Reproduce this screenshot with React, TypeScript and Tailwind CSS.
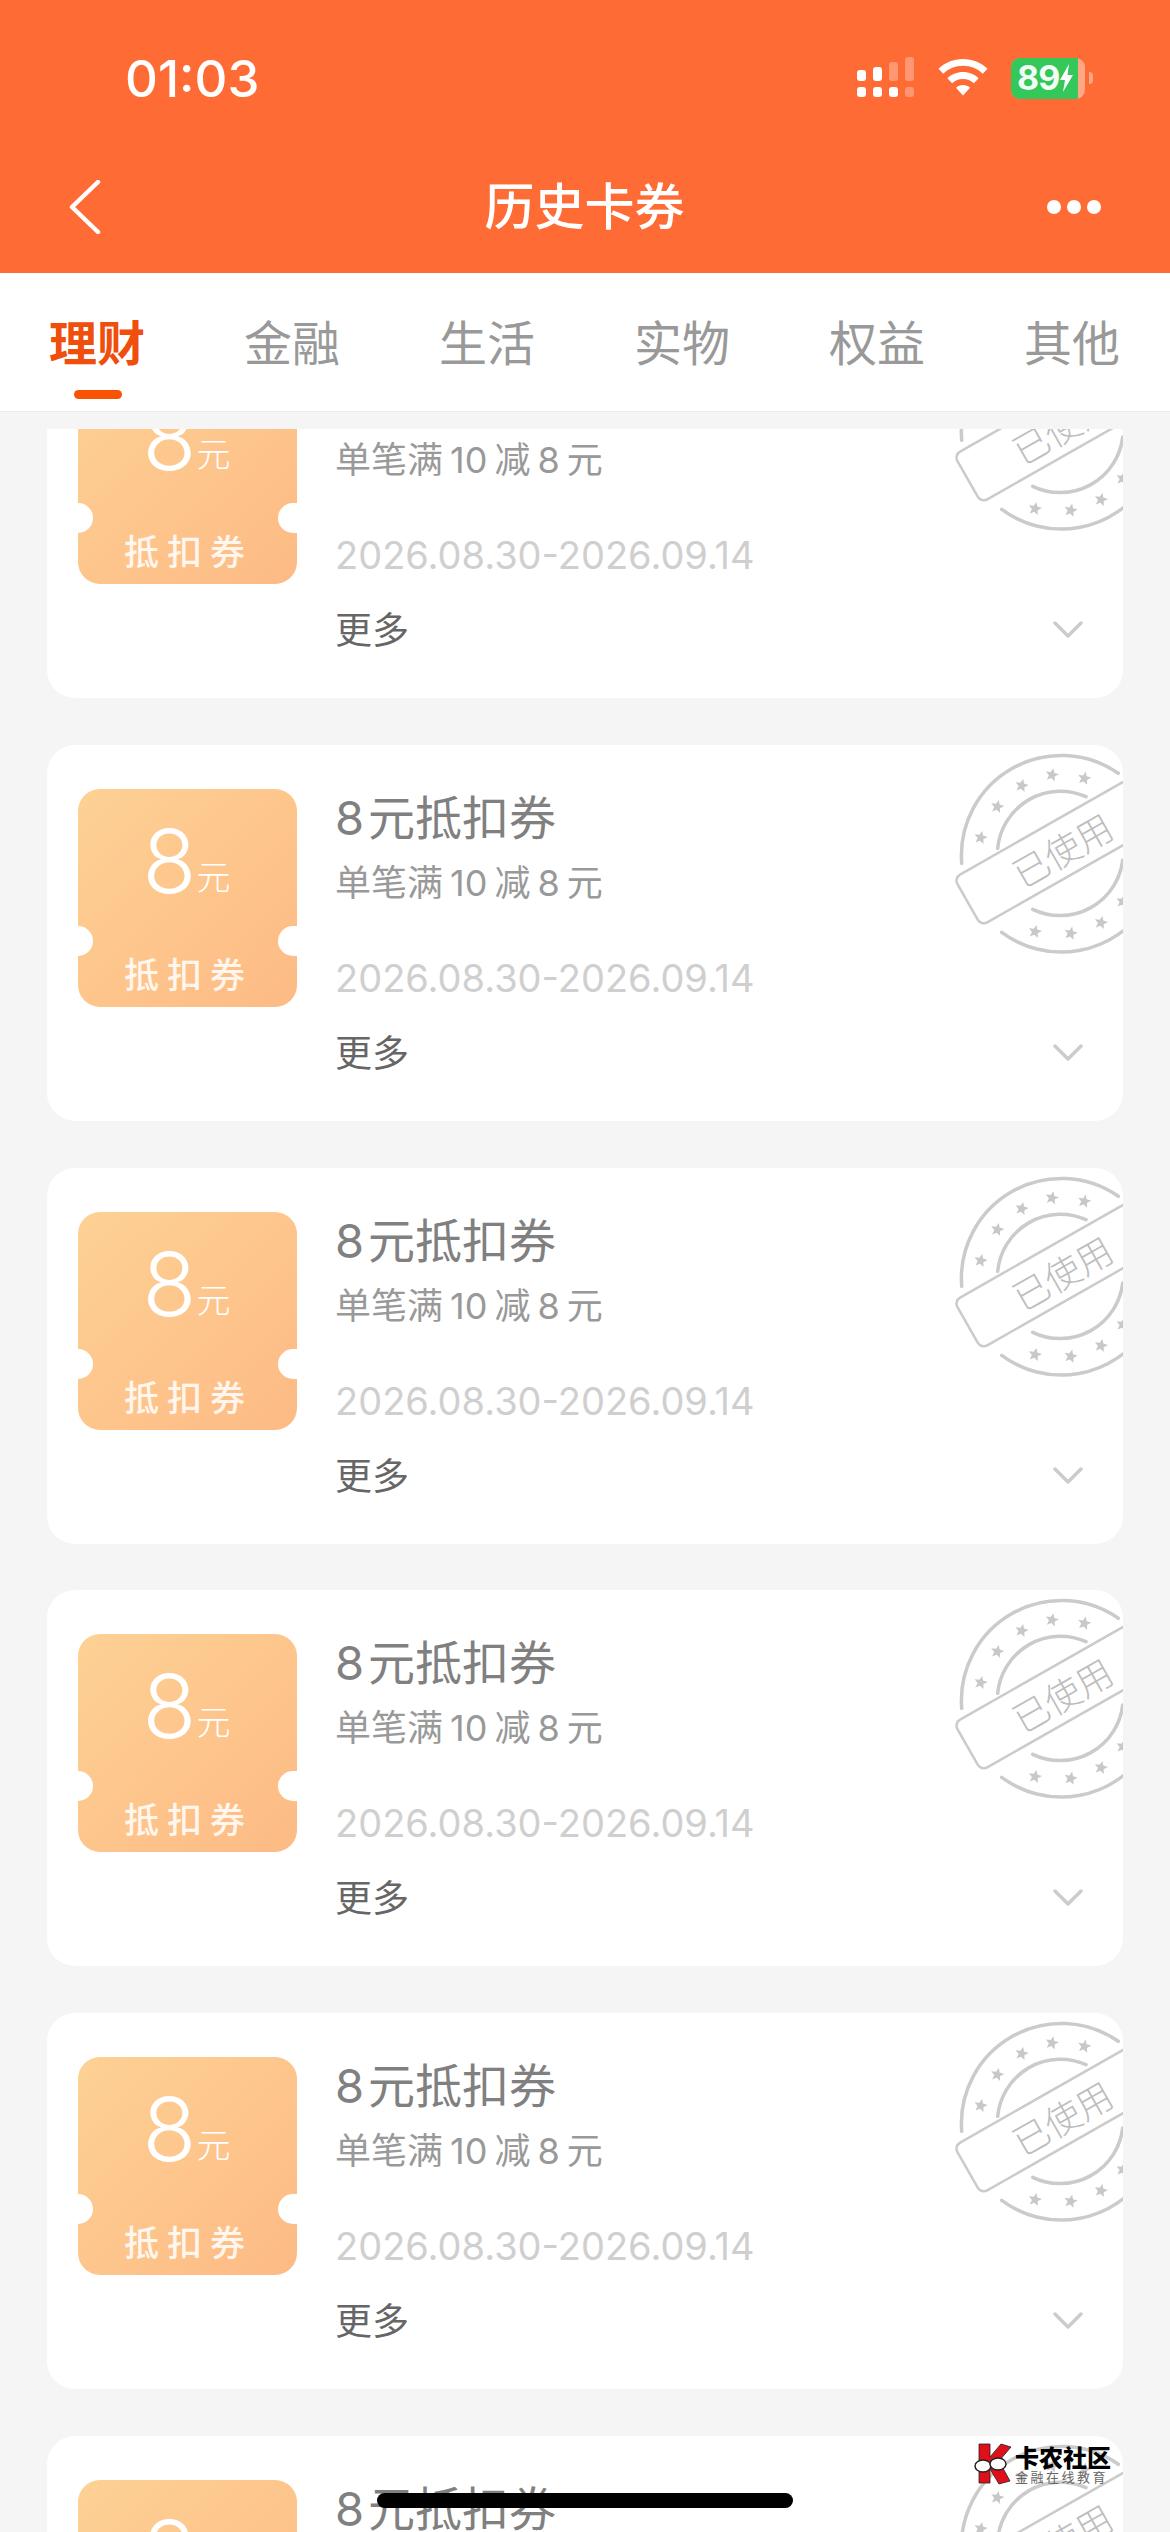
import React from 'react';

const cjk = '[font-family:Inter,"Noto_Sans_CJK_SC",sans-serif]';

const starSpots = [
  [80.7, 107.7], [97.3, 76.7], [121.7, 55.7], [152, 45], [184.3, 48.3],
  [135, 201.7], [170.7, 203.3], [201, 192.7], [222.7, 171.7],
];

function starPoints(cx: number, cy: number, r: number) {
  const pts: string[] = [];
  for (let i = 0; i < 10; i++) {
    const rad = i % 2 === 0 ? r : r * 0.45;
    const a = (-90 + i * 36 + 12) * (Math.PI / 180);
    pts.push(`${(cx + rad * Math.cos(a)).toFixed(1)},${(cy + rad * Math.sin(a)).toFixed(1)}`);
  }
  return pts.join(' ');
}

const Stamp = () => (
  <svg className="absolute left-[853px] top-[-15px]" width="270" height="240" viewBox="0 0 270 240" fill="none">
    <g stroke="#cbcbcb" strokeWidth="3.5" strokeLinecap="round">
      <path d="M61.7 133.3A100 100 0 0 1 218.3 43.3" />
      <path d="M101.7 202.3A100 100 0 0 0 245 177" />
      <path d="M97.7 118.3A63 63 0 0 1 186 66.7" />
      <path d="M132.7 179.3A63 63 0 0 0 222.7 130" />
    </g>
    {starSpots.map(([x, y]) => (
      <polygon key={`${x}-${y}`} points={starPoints(x, y, 7)} fill="#c8c8c8" />
    ))}
    <rect x="54" y="148" width="225" height="55" rx="7" fill="#fff" stroke="#cbcbcb" strokeWidth="2.5" transform="rotate(-29.6 54 148)" />
    <text
      x="163"
      y="134"
      textAnchor="middle"
      fontSize="36"
      fill="#bdbdbd"
      fontFamily='"Noto Sans CJK SC", sans-serif'
      fontWeight="300"
      transform="rotate(-29.6 163 121)"
    >
      已使用
    </text>
  </svg>
);

const Ticket = () => (
  <div className="relative h-[218px] w-[219px] shrink-0 overflow-hidden rounded-[22px] bg-gradient-to-br from-[#fdd195] to-[#fdba84] text-white">
    <div className="absolute left-[-15px] top-[137px] h-[30px] w-[30px] rounded-full bg-white" />
    <div className="absolute right-[-19px] top-[137px] h-[30px] w-[38px] rounded-full bg-white" />
    <div className="flex h-[132px] items-end justify-center pb-[10px] pr-[2px]">
      <span className="text-[88px] font-light leading-[100px]">8</span>
      <span className="mb-[13px] text-[34px] font-light leading-[40px]">元</span>
    </div>
    <div className="flex justify-center gap-[8px] pr-[6px] pt-[32px] text-[35px] font-medium leading-[44px] text-white/85">
      <span>抵</span>
      <span>扣</span>
      <span>券</span>
    </div>
  </div>
);

const Coupon = () => (
  <div className={`relative h-[376px] shrink-0 overflow-hidden rounded-[28px] bg-white ${cjk}`}>
    <div className="flex pl-[31px] pt-[44px]">
      <Ticket />
      <div className="ml-[38px] flex flex-col">
        <div className="mt-[1px] flex h-[56px] items-center gap-[4px] text-[47px] leading-[56px] text-[#808080]">
          <span>8</span>
          <span>元抵扣券</span>
        </div>
        <div className="mt-[13px] flex h-[48px] items-center gap-[7px] text-[36px] leading-[48px] text-[#999999]">
          <span>单笔满</span>
          <span>10</span>
          <span>减</span>
          <span>8</span>
          <span>元</span>
        </div>
        <div className="mt-[47px] h-[48px] text-[38px] leading-[48px] text-[#cfcfcf]">2026.08.30-2026.09.14</div>
        <div className="mt-[28px] h-[48px] text-[37px] leading-[48px] text-[#666666]">更多</div>
      </div>
    </div>
    <Stamp />
    <svg className="absolute left-[1006px] top-[298px]" width="30" height="20" viewBox="0 0 30 20" fill="none">
      <path d="M2 3l13 13L28 3" stroke="#cccccc" strokeWidth="3.5" strokeLinecap="round" strokeLinejoin="round" />
    </svg>
  </div>
);

const StatusIcons = () => (
  <div className="flex items-center">
    <svg width="58" height="42" viewBox="0 0 58 42" fill="#fff">
      <rect x="0" y="13" width="9" height="11" rx="3" />
      <rect x="16" y="10" width="9" height="14" rx="3" />
      <rect x="32" y="5" width="9" height="19" rx="3" opacity="0.3" />
      <rect x="48" y="0" width="9" height="24" rx="3" opacity="0.3" />
      <rect x="0" y="30" width="9" height="10" rx="3" />
      <rect x="16" y="30" width="9" height="10" rx="3" />
      <rect x="32" y="30" width="9" height="10" rx="3" />
      <rect x="48" y="30" width="9" height="10" rx="3" opacity="0.3" />
    </svg>
    <svg className="ml-[23px]" width="50" height="38" viewBox="0 0 50 38" fill="#fff">
      <path d="M25 0c9.500 0 18 3.600 24.500 9.700L44.800 14.700C39.600 9.800 32.700 6.800 25 6.800S10.400 9.800 5.200 14.700L.5 9.700C7 3.600 15.500 0 25 0z" />
      <path d="M25 13c6 0 11.500 2.300 15.600 6.200l-4.700 5C33 21.500 29.200 20 25 20s-8 1.500-10.900 4.200l-4.700-5C13.500 15.300 19 13 25 13z" />
      <path d="M25 26c2.700 0 5.100 1 7 2.700L25 36.500l-7-7.800c1.900-1.700 4.300-2.700 7-2.700z" />
    </svg>
    <div className="relative ml-[23px] h-[41px] w-[74px] overflow-hidden rounded-[9px] bg-white/40">
      <div className="flex h-full w-[67px] items-center bg-[#34c759] pl-[6px] text-[34px] font-bold leading-none text-white/95 [font-family:Inter,sans-serif]">
        <span className="tracking-[-1px]">89</span>
        <svg width="15" height="30" viewBox="0 0 15 30" fill="#fff" className="shrink-0">
          <path d="M10 1L1 17h5L4 29l10-17H8.500z" />
        </svg>
      </div>
    </div>
    <div className="ml-[4px] h-[12px] w-[4px] rounded-r-full bg-white/40" />
  </div>
);

const tabs = ['理财', '金融', '生活', '实物', '权益', '其他'];

const Tabs = () => (
  <div className="flex h-[139px] border-b border-[#ececec] bg-white pl-[49px] pt-[45px]">
    {tabs.map((t, i) => (
      <div key={t} className="flex w-[195px] shrink-0 flex-col">
        <span className={i === 0 ? 'text-[48px] font-bold leading-[52px] text-[#f04e0c]' : 'text-[48px] leading-[52px] text-[#999999]'}>
          {t}
        </span>
        {i === 0 && <div className="ml-[25px] mt-[20px] h-[9px] w-[48px] rounded-full bg-[#fa5205]" />}
      </div>
    ))}
  </div>
);

const Watermark = () => (
  <div className="absolute left-[972px] top-[2443px] flex h-[42px] items-center">
    <svg width="42" height="42" viewBox="0 0 42 42">
      <path d="M7 1h11v13L29 1l10 3-12 14 11 20-11 3-9-15v14H7z" fill="#e0101a" stroke="#222" strokeWidth="0.800" />
      <path d="M3 21c4-3 10-3 14-1 4-2 10-2 14-4" fill="none" stroke="#222" strokeWidth="1.500" />
      <ellipse cx="11" cy="23" rx="8" ry="6" fill="#fff" stroke="#222" strokeWidth="1.500" />
      <ellipse cx="26" cy="21" rx="8" ry="6" fill="#fff" stroke="#222" strokeWidth="1.500" />
    </svg>
    <div className="ml-[1px] flex flex-col [font-family:'Noto_Sans_CJK_SC',sans-serif]">
      <span className="text-[24px] font-black leading-[25px] text-black">卡农社区</span>
      <span className="mt-[1px] text-[13px] leading-[14px] tracking-[2.500px] text-[#666666]">金融在线教育</span>
    </div>
  </div>
);

export default function App() {
  return (
    <div className={`relative flex h-[2532px] w-[1170px] flex-col overflow-hidden bg-[#f5f5f5] ${cjk}`}>
      <div className="h-[273px] shrink-0 bg-[#ff6b35] text-white">
        <div className="flex h-[156px] items-center justify-between pl-[125px] pr-[77px]">
          <span className="text-[51px] font-medium leading-none [font-family:Inter,sans-serif]">01:03</span>
          <StatusIcons />
        </div>
        <div className="grid h-[102px] grid-cols-3 items-center pl-[68px] pr-[69px]">
          <svg width="34" height="54" viewBox="0 0 34 54" fill="none">
            <path d="M30 2L4 27l26 25" stroke="#fff" strokeWidth="4.500" strokeLinecap="round" strokeLinejoin="round" />
          </svg>
          <span className="whitespace-nowrap text-center text-[50px] font-medium leading-none">历史卡券</span>
          <div className="flex justify-end gap-[6px]">
            <div className="h-[14px] w-[14px] rounded-full bg-white" />
            <div className="h-[14px] w-[14px] rounded-full bg-white" />
            <div className="h-[14px] w-[14px] rounded-full bg-white" />
          </div>
        </div>
      </div>
      <Tabs />
      <div className="mt-[17px] flex min-h-0 flex-1 flex-col overflow-hidden px-[47px]">
        <div className="mt-[-107px] flex flex-col gap-[46.75px]">
          <Coupon />
          <Coupon />
          <Coupon />
          <Coupon />
          <Coupon />
          <Coupon />
        </div>
      </div>
      <Watermark />
      <div className="absolute left-[377px] top-[2493px] h-[15px] w-[416px] rounded-full bg-black" />
    </div>
  );
}
